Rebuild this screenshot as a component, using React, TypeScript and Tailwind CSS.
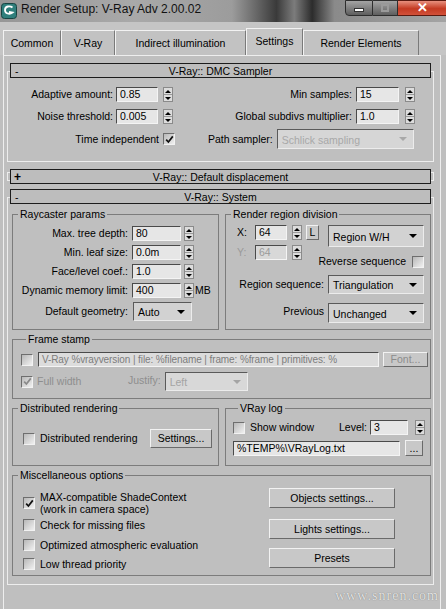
import React from "react";

function Spin({ cls = "" }: { cls?: string }) {
  return (
    <div className={`flex h-[15px] w-[10px] flex-col border border-[#8a8a8a] bg-[#dcdcdc] ${cls}`}>
      <div className="flex flex-1 items-center justify-center border-b border-[#9a9a9a]">
        <div className="h-0 w-0 border-x-[3px] border-b-[3px] border-x-transparent border-b-black" />
      </div>
      <div className="flex flex-1 items-center justify-center">
        <div className="h-0 w-0 border-x-[3px] border-t-[3px] border-x-transparent border-t-black" />
      </div>
    </div>
  );
}

function Field({ v, cls = "" }: { v: string; cls?: string }) {
  return (
    <div
      className={`h-[15px] overflow-hidden whitespace-nowrap border border-b-[#f4f4f4] border-l-[#4a4a4a] border-r-[#f4f4f4] border-t-[#4a4a4a] pl-[3px] leading-[13px] ${cls}`}
    >
      {v}
    </div>
  );
}

function Check({ on, dim, cls = "" }: { on?: boolean; dim?: boolean; cls?: string }) {
  return (
    <div
      className={`flex h-[12px] w-[12px] shrink-0 items-center justify-center border border-b-[#f2f2f2] border-l-[#6e6e6e] border-r-[#f2f2f2] border-t-[#6e6e6e] bg-[linear-gradient(135deg,#b8b8b8,#f0f0f0)] ${cls}`}
    >
      {on && (
        <svg width="9" height="9" viewBox="0 0 9 9">
          <path d="M1.2 4.6 L3.4 7 L7.8 1.4" fill="none" stroke={dim ? "#8a8a8a" : "#111"} strokeWidth="1.7" />
        </svg>
      )}
    </div>
  );
}

function Drop({ text, cls = "" }: { text: string; cls?: string }) {
  return (
    <div
      className={`flex items-center justify-between border border-b-[#ececec] border-l-[#5a5a5a] border-r-[#ececec] border-t-[#5a5a5a] pl-[4px] pr-[6px] ${cls}`}
    >
      <span className="mt-[2px] whitespace-nowrap">{text}</span>
      <div className="h-0 w-0 border-x-[4px] border-t-[4px] border-x-transparent border-t-current" />
    </div>
  );
}

function Btn({ text, cls = "" }: { text: string; cls?: string }) {
  return (
    <div
      className={`flex items-center justify-center border border-b-[#6a6a6a] border-l-[#f2f2f2] border-r-[#6a6a6a] border-t-[#f2f2f2] bg-[#c8c8c8] ${cls}`}
    >
      {text}
    </div>
  );
}

function Header({ sign, title, closed }: { sign: string; title: string; closed?: boolean }) {
  return (
    <div className="flex h-[15px]">
      <div
        className={
          closed
            ? "my-[3px] w-[3px] border-y border-l border-[#ededed]"
            : "mt-[8px] w-[3px] border-l border-t border-[#ededed]"
        }
      />
      <div className="grid flex-1 grid-cols-[14px_1fr_14px] items-center border border-[#1c1c1c] bg-[#bdbdbd]">
        <span className={closed ? "pl-[3px] text-[12px] font-bold leading-[12px]" : "pl-[4px] leading-[12px]"}>{sign}</span>
        <span className="text-center leading-[12px]">{title}</span>
        <span />
      </div>
      <div
        className={
          closed
            ? "my-[3px] w-[3px] border-y border-r border-[#ededed]"
            : "mt-[8px] w-[3px] border-r border-t border-[#ededed]"
        }
      />
    </div>
  );
}

function Group({ title, cls = "", children }: { title: string; cls?: string; children: React.ReactNode }) {
  return (
    <fieldset className={`border border-[#7c7c7c] ${cls}`}>
      <legend className="ml-[5px] px-[2px] leading-[13px]">{title}</legend>
      {children}
    </fieldset>
  );
}

const TABS = [
  { t: "Common", w: "w-[58px]" },
  { t: "V-Ray", w: "w-[54px]" },
  { t: "Indirect illumination", w: "w-[131px]" },
  { t: "Settings", w: "w-[57px]", on: true },
  { t: "Render Elements", w: "w-[116px]" },
];

const RAY = [
  { l: "Max. tree depth:", v: "80" },
  { l: "Min. leaf size:", v: "0.0m" },
  { l: "Face/level coef.:", v: "1.0" },
  { l: "Dynamic memory limit:", v: "400", mb: true },
];

const MISC = ["Check for missing files", "Optimized atmospheric evaluation", "Low thread priority"];

export default function App() {
  return (
    <div className="h-[609px] w-[446px] overflow-hidden bg-[#bfbfbf] font-['Liberation_Sans',Arial,sans-serif] text-[10.5px] leading-[13px] text-black">
      {/* title bar */}
      <div className="flex h-[22px] items-start bg-[linear-gradient(90deg,#969696_0%,#a9a9a9_30%,#9c9c9c_52%,#6c6c6c_57%,#3a3a3a_62%,#7c7c7c_66%,#2c2c2c_70%,#8a8a8a_75%,#a4a4a4_100%)]">
        <svg className="ml-[1px] mt-[3px]" width="16" height="16" viewBox="0 0 16 16">
          <rect x="0.5" y="0.5" width="15" height="15" rx="3" fill="#2f7f7c" stroke="#174442" />
          <path d="M11.5 4.5 C9 2.5 4 3 4 7 C4 10.5 8.5 12 11.5 9.5 L8 9" fill="none" stroke="#fff" strokeWidth="1.8" />
        </svg>
        <span className="ml-[4px] mt-[1px] text-[12px] leading-[16px] text-[#111]">Render Setup: V-Ray Adv 2.00.02</span>
        <div className="ml-auto flex h-[16px]">
          <div className="flex w-[28px] items-center justify-center rounded-bl-[4px] border border-[#2e2e2e] bg-[linear-gradient(#a4a4a4,#5e5e5e)]">
            <div className="mt-[4px] h-[4px] w-[10px] border border-[#333] bg-white" />
          </div>
          <div className="flex w-[25px] items-center justify-center border-y border-r border-[#2e2e2e] bg-[linear-gradient(#a4a4a4,#5e5e5e)]">
            <div className="h-[8px] w-[8px] border-2 border-[#9a9a9a]" />
          </div>
          <div className="flex w-[48px] items-center justify-center border-y border-[#5a1a10] bg-[linear-gradient(#e8907e,#c43a22_55%,#d2513a)] text-[13px] font-bold leading-[14px] text-white">
            ✕
          </div>
        </div>
      </div>

      {/* tabs */}
      <div className="flex h-[33px] items-end bg-[#c5c5c5] pl-[3px]">
        {TABS.map((t) => (
          <div
            key={t.t}
            className={`flex items-center justify-center border-l border-r border-t border-l-[#f2f2f2] border-r-[#7a7a7a] border-t-[#f2f2f2] ${t.w} ${
              t.on ? "h-[27px] bg-[#c5c5c5] pb-[2px]" : "h-[25px] bg-[#c2c2c2]"
            }`}
          >
            {t.t}
          </div>
        ))}
      </div>

      {/* panel */}
      <div className="ml-[3px] h-[554px] w-[438px] border-l border-r border-t border-[#eeeeee] pl-[3px] pt-[7px]">
        <div className="w-[427px]">
          {/* DMC sampler */}
          <Header sign="-" title="V-Ray:: DMC Sampler" />
          <div className="border-x border-b border-[#ededed] pb-[12px] pt-[9px]">
            <div className="flex h-[15px] items-center">
              <span className="w-[105px] text-right">Adaptive amount:</span>
              <Field v="0.85" cls="ml-[3px] w-[42px] bg-[#e6e6e6]" />
              <Spin cls="ml-[5px]" />
              <span className="w-[179px] text-right">Min samples:</span>
              <Field v="15" cls="ml-[4px] w-[43px] bg-[#e6e6e6]" />
              <Spin cls="ml-[6px]" />
            </div>
            <div className="mt-[7px] flex h-[15px] items-center">
              <span className="w-[105px] text-right">Noise threshold:</span>
              <Field v="0.005" cls="ml-[3px] w-[42px] bg-[#e6e6e6]" />
              <Spin cls="ml-[5px]" />
              <span className="w-[179px] text-right">Global subdivs multiplier:</span>
              <Field v="1.0" cls="ml-[4px] w-[43px] bg-[#e6e6e6]" />
              <Spin cls="ml-[6px]" />
            </div>
            <div className="mt-[5px] flex h-[20px] items-center">
              <span className="w-[151px] text-right">Time independent</span>
              <Check on cls="ml-[4px]" />
              <span className="ml-[33px]">Path sampler:</span>
              <Drop text="Schlick sampling" cls="ml-[4px] h-[20px] w-[137px] bg-[#d6d6d6] text-[#a8a8a8]" />
            </div>
          </div>

          {/* default displacement */}
          <div className="mt-[7px]">
            <Header sign="+" title="V-Ray:: Default displacement" closed />
          </div>

          {/* system */}
          <div className="mt-[5px]">
            <Header sign="-" title="V-Ray:: System" />
          </div>
          <div className="border-x border-b border-[#ededed] pb-[8px] pl-[4px] pr-[2px] pt-[4px]">
            <div className="grid grid-cols-[207px_1fr] gap-x-[6px]">
              <Group title="Raycaster params" cls="pb-[8px]">
                <div className="mt-[5px] flex flex-col gap-[4px]">
                  {RAY.map((r) => (
                    <div key={r.l} className="flex h-[15px] items-center">
                      <span className="w-[115px] text-right">{r.l}</span>
                      <Field v={r.v} cls="ml-[4px] w-[49px] bg-[#e6e6e6]" />
                      <Spin cls="ml-[3px]" />
                      {r.mb && <span className="ml-[1px]">MB</span>}
                    </div>
                  ))}
                  <div className="flex h-[19px] items-center">
                    <span className="w-[115px] text-right">Default geometry:</span>
                    <Drop text="Auto" cls="ml-[5px] h-[19px] w-[59px] bg-[#d2d2d2]" />
                  </div>
                </div>
              </Group>

              <Group title="Render region division" cls="pb-[6px]">
                <div className="mt-[4px] flex items-start pl-[11px]">
                  <div className="flex flex-col gap-[5px]">
                    <div className="flex h-[15px] items-center">
                      <span className="w-[18px]">X:</span>
                      <Field v="64" cls="w-[32px] bg-[#e6e6e6]" />
                      <Spin cls="ml-[5px]" />
                      <Btn text="L" cls="ml-[4px] h-[15px] w-[13px]" />
                    </div>
                    <div className="flex h-[15px] items-center text-[#9a9a9a]">
                      <span className="w-[18px]">Y:</span>
                      <Field v="64" cls="w-[32px] bg-[#d8d8d8]" />
                      <Spin cls="ml-[5px]" />
                    </div>
                  </div>
                  <Drop text="Region W/H" cls="ml-[9px] h-[22px] w-[96px] bg-[#d2d2d2]" />
                </div>
                <div className="-mt-[5px] flex h-[13px] items-center justify-end pr-[6px]">
                  <span>Reverse sequence</span>
                  <Check cls="ml-[6px]" />
                </div>
                <div className="mt-[7px] flex h-[19px] items-center justify-end pr-[6px]">
                  <span>Region sequence:</span>
                  <Drop text="Triangulation" cls="ml-[4px] h-[19px] w-[96px] bg-[#d2d2d2]" />
                </div>
                <div className="mt-[9px] flex h-[20px] items-center justify-end pr-[6px]">
                  <span className="-mt-[4px]">Previous</span>
                  <Drop text="Unchanged" cls="ml-[4px] h-[20px] w-[96px] bg-[#d2d2d2]" />
                </div>
              </Group>
            </div>

            <Group title="Frame stamp" cls="mt-[3px] pb-[7px] pl-[8px]">
              <div className="mt-[6px] flex h-[15px] items-center">
                <Check />
                <Field
                  v="V-Ray %vrayversion | file: %filename | frame: %frame | primitives: %"
                  cls="ml-[5px] h-[14px] w-[341px] bg-[#dcdcdc] text-[10px] tracking-[-0.1px] text-[#7c7c7c]"
                />
                <Btn text="Font..." cls="ml-[4px] h-[15px] w-[45px] text-[#8c8c8c]" />
              </div>
              <div className="mt-[5px] flex h-[19px] items-center text-[#8e8e8e]">
                <div className="flex w-[107px] items-center">
                  <Check on dim />
                  <span className="ml-[4px]">Full width</span>
                </div>
                <span className="-mt-[3px]">Justify:</span>
                <Drop text="Left" cls="ml-[4px] h-[19px] w-[83px] bg-[#d8d8d8] text-[#a4a4a4]" />
              </div>
            </Group>

            <div className="mt-[3px] grid grid-cols-[207px_1fr] gap-x-[6px]">
              <Group title="Distributed rendering" cls="pb-[17px]">
                <div className="mt-[14px] flex h-[19px] items-center pl-[10px] pr-[6px]">
                  <Check />
                  <span className="ml-[5px]">Distributed rendering</span>
                  <Btn text="Settings..." cls="ml-auto h-[19px] w-[62px]" />
                </div>
              </Group>
              <Group title="VRay log" cls="pb-[9px] pl-[7px] pr-[5px]">
                <div className="mt-[5px] flex h-[15px] items-center">
                  <Check />
                  <span className="ml-[5px]">Show window</span>
                  <span className="ml-auto">Level:</span>
                  <Field v="3" cls="ml-[3px] h-[14px] w-[38px] bg-[#e6e6e6]" />
                  <Spin cls="ml-[7px]" />
                </div>
                <div className="mt-[5px] flex h-[16px] items-center">
                  <Field v="%TEMP%\VRayLog.txt" cls="h-[14px] w-[167px] bg-[#e6e6e6]" />
                  <Btn text="..." cls="ml-[5px] h-[16px] w-[18px]" />
                </div>
              </Group>
            </div>

            <Group title="Miscellaneous options" cls="mt-[3px] pb-[4px]">
              <div className="mt-[6px] flex items-start">
                <div className="flex-1 pl-[10px] pt-[3px]">
                  <div className="flex items-center">
                    <Check on />
                    <span className="ml-[5px] leading-[12px]">
                      MAX-compatible ShadeContext
                      <br />
                      (work in camera space)
                    </span>
                  </div>
                  {MISC.map((m, i) => (
                    <div key={m} className={`flex h-[14px] items-center ${i === 0 ? "mt-[3px]" : i === 1 ? "mt-[6px]" : "mt-[5px]"}`}>
                      <Check />
                      <span className="ml-[5px]">{m}</span>
                    </div>
                  ))}
                </div>
                <div className="mr-[35px] flex w-[126px] flex-col">
                  <Btn text="Objects settings..." cls="h-[20px]" />
                  <Btn text="Lights settings..." cls="mt-[11px] h-[20px]" />
                  <Btn text="Presets" cls="mt-[9px] h-[20px]" />
                </div>
              </div>
            </Group>
          </div>
        </div>
        <div className="mt-[4px] pr-[1px] text-right font-['Liberation_Serif',serif] text-[14px] leading-[14px] tracking-[1px] text-[#e2e2e2] [text-shadow:0_0_1px_#6a6a6a]">
          www.snren.com
        </div>
      </div>
    </div>
  );
}
